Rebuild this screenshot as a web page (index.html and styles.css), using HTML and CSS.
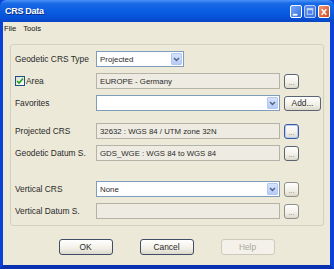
FILE: index.html
```html
<!DOCTYPE html>
<html>
<head>
<meta charset="utf-8">
<link rel="stylesheet" href="styles.css">
</head>
<body>
<div class="window">
  <div class="titlebar">
    <span class="title">CRS Data</span>
    <div class="tb-buttons">
      <span class="tb-btn tb-min"><svg width="11" height="12" viewBox="0 0 11 12"><rect x="2" y="8" width="5" height="2" fill="#fff"/></svg></span>
      <span class="tb-btn tb-max"><svg width="11" height="12" viewBox="0 0 11 12"><rect x="2.5" y="2.5" width="6" height="6" fill="none" stroke="#c9d6f5" stroke-width="1"/><rect x="2" y="2" width="7" height="2" fill="#c9d6f5"/></svg></span>
      <span class="tb-btn tb-close"><svg width="11" height="12" viewBox="0 0 11 12"><path d="M3 3 L8 9 M8 3 L3 9" stroke="#fff" stroke-width="1.6"/></svg></span>
    </div>
  </div>
  <div class="client">
    <div class="menubar"><span>File</span><span>Tools</span></div>
    <div class="group">
      <div class="row">
        <span class="label">Geodetic CRS Type</span>
        <div class="select short"><span class="val">Projected</span><span class="arrow"><svg width="7" height="5" viewBox="0 0 7 5"><path d="M1 1 L3.5 3.5 L6 1" fill="none" stroke="#4d6185" stroke-width="1.4"/></svg></span></div>
      </div>
      <div class="row">
        <span class="label check"><span class="cb"><svg width="8" height="8" viewBox="0 0 8 8"><path d="M1 4 L3 6 L7 1.5" fill="none" stroke="#21a121" stroke-width="1.6"/></svg></span>Area</span>
        <div class="field">EUROPE - Germany</div>
        <span class="btn dots">...</span>
      </div>
      <div class="row">
        <span class="label">Favorites</span>
        <div class="select wide"><span class="val"></span><span class="arrow"><svg width="7" height="5" viewBox="0 0 7 5"><path d="M1 1 L3.5 3.5 L6 1" fill="none" stroke="#4d6185" stroke-width="1.4"/></svg></span></div>
        <span class="btn add">Add...</span>
      </div>
      <div class="row sep">
        <span class="label">Projected CRS</span>
        <div class="field">32632 : WGS 84 / UTM zone 32N</div>
        <span class="btn dots focus">...</span>
      </div>
      <div class="row">
        <span class="label">Geodetic Datum S.</span>
        <div class="field">GDS_WGE : WGS 84 to WGS 84</div>
        <span class="btn dots">...</span>
      </div>
      <div class="row sep2">
        <span class="label">Vertical CRS</span>
        <div class="select wide"><span class="val">None</span><span class="arrow"><svg width="7" height="5" viewBox="0 0 7 5"><path d="M1 1 L3.5 3.5 L6 1" fill="none" stroke="#4d6185" stroke-width="1.4"/></svg></span></div>
        <span class="btn dots light">...</span>
      </div>
      <div class="row">
        <span class="label">Vertical Datum S.</span>
        <div class="field"></div>
        <span class="btn dots light">...</span>
      </div>
    </div>
    <div class="actions">
      <span class="btn big">OK</span>
      <span class="btn big">Cancel</span>
      <span class="btn big disabled">Help</span>
    </div>
  </div>
</div>
</body>
</html>
```
FILE: styles.css
```css
* { box-sizing: border-box; }
html, body { margin: 0; padding: 0; background: #ece9d8; }
body { font-family: "Liberation Sans", Arial, sans-serif; font-size: 8.4px; color: #111; }
.window { width: 334px; height: 269px; display: flex; flex-direction: column; background: #0842d6; }
.titlebar {
  height: 22px; display: flex; align-items: center; justify-content: space-between;
  padding: 0 4px 0 5px;
  background: linear-gradient(#4a94f7 0%, #1a6ae6 15%, #0a5de0 50%, #0652d8 80%, #0a46c4 100%);
  border-radius: 6px 6px 0 0;
}
.title { color: #fff; font-weight: bold; font-size: 9px; letter-spacing: -0.3px; text-shadow: 1px 1px 0 #0a2a80; }
.tb-buttons { display: flex; gap: 2px; margin-top: 1px; }
.tb-btn { width: 12px; height: 13px; border: 1px solid #fff; border-radius: 2px; display: flex; align-items: center; justify-content: center; }
.tb-min { background: linear-gradient(135deg, #7aa8f6, #2f6ee6); }
.tb-max { background: linear-gradient(135deg, #5a8ef0, #3b74e6); border-color: #b9ccf4; }
.tb-close { background: linear-gradient(135deg, #ee9878, #d8491f); }
.client {
  flex: 1; display: flex; flex-direction: column;
  background: #ece9d8;
  border-left: 3px solid #0842d6; border-right: 4px solid #0842d6; border-bottom: 4px solid #0731b0;
}
.menubar { height: 12px; display: flex; gap: 7px; padding-left: 1px; align-items: center; font-size: 7.6px; }
.group {
  margin: 10px 6px 0 7px; border: 1px solid #d3d0c0; border-radius: 3px;
  padding: 6px 2px 6px 4px; display: flex; flex-direction: column; gap: 6px;
}
.row { height: 16px; display: flex; align-items: center; }
.row.sep { margin-top: 6px; }
.row.sep2 { margin-top: 14px; }
.label { width: 81px; flex: none; color: #2a2a2a; }
.label.check { display: flex; align-items: center; gap: 1px; }
.cb { width: 10px; height: 10px; border: 1px solid #1c5180; background: linear-gradient(135deg, #dcdcd7, #fff); display: flex; align-items: center; justify-content: center; }
.field {
  width: 184px; height: 16px; border: 1px solid #b5b3a8; background: #eeece2;
  padding: 0 3px; display: flex; align-items: center; white-space: nowrap; overflow: hidden; color: #2a2a2a;
  font-size: 7.8px;
}
.select {
  height: 16px; border: 1px solid #7f9db9; background: #fff; display: flex; align-items: center; padding: 1px;
  font-size: 7.9px;
}
.select.short { width: 88px; }
.select.wide { width: 184px; }
.select .val { flex: 1; padding-left: 2px; color: #2a2a2a; }
.select .arrow {
  width: 11px; height: 12px; background: linear-gradient(#d7e3fd, #b6cbf7);
  border: 1px solid #b3c7f3; border-radius: 1px; display: flex; align-items: center; justify-content: center;
}
.btn {
  display: flex; align-items: center; justify-content: center;
  border: 1px solid #5b6470; border-radius: 3px;
  background: linear-gradient(#ffffff, #f1efe6 60%, #dcd8cb);
  color: #2a2a2a;
}
.dots { width: 15px; height: 15px; margin-left: 4px; font-size: 7px; align-items: flex-end; padding-bottom: 2px; line-height: 1; color: #777; }
.dots.focus { border-color: #3a5aa8; box-shadow: inset 0 0 0 1px #b9cdf3; }
.dots.light { border-color: #8f8f8a; }
.add { width: 37px; height: 15px; margin-left: 4px; }
.actions { display: flex; justify-content: center; gap: 27px; margin-top: 13px; }
.big { width: 54px; height: 16px; border-color: #3f4d66; }
.big.disabled { border-color: #cdcabb; color: #aca899; background: #f3f1e9; }
```
